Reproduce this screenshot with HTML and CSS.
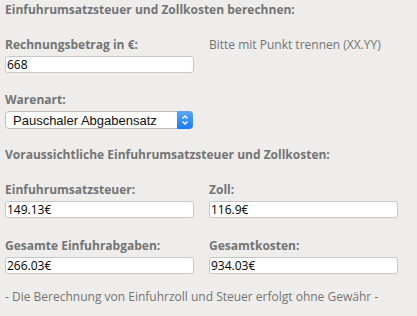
FILE: index.html
```html
<!DOCTYPE html>
<html lang="de">
<head>
    <meta charset="UTF-8">
    <title>Einfuhrumsatzsteuer und Zollkosten</title>
    <link rel="stylesheet" href="styles.css">
</head>
<body>
    <form class="calc">
        <h3 class="title">Einfuhrumsatzsteuer und Zollkosten berechnen:</h3>

        <div class="row first">
            <div class="field">
                <label class="lbl" for="betrag">Rechnungsbetrag in €:</label>
                <input type="text" id="betrag" value="668">
            </div>
            <div class="hint">Bitte mit Punkt trennen (XX.YY)</div>
        </div>

        <div class="field warenart">
            <label class="lbl" for="warenart">Warenart:</label>
            <div class="select-wrap">
                <select id="warenart">
                    <option>Pauschaler Abgabensatz</option>
                </select>
                <span class="select-btn">
                    <svg width="16" height="18" viewBox="0 0 16 18">
                        <path d="M5.5 7.5 L8 5 L10.5 7.5" fill="none" stroke="#fff" stroke-width="1.3"/>
                        <path d="M5.5 10.5 L8 13 L10.5 10.5" fill="none" stroke="#fff" stroke-width="1.3"/>
                    </svg>
                </span>
            </div>
        </div>

        <h3 class="title sub">Voraussichtliche Einfuhrumsatzsteuer und Zollkosten:</h3>

        <div class="row second">
            <div class="field">
                <label class="lbl">Einfuhrumsatzsteuer:</label>
                <input type="text" value="149.13€">
            </div>
            <div class="field">
                <label class="lbl">Zoll:</label>
                <input type="text" value="116.9€">
            </div>
        </div>

        <div class="row third">
            <div class="field">
                <label class="lbl">Gesamte Einfuhrabgaben:</label>
                <input type="text" value="266.03€">
            </div>
            <div class="field">
                <label class="lbl">Gesamtkosten:</label>
                <input type="text" value="934.03€">
            </div>
        </div>

        <p class="note">- Die Berechnung von Einfuhrzoll und Steuer erfolgt ohne Gewähr -</p>
    </form>
</body>
</html>
```

FILE: styles.css
```css
body {
    margin: 0;
    padding: 2px 5px 0;
    background-color: #efedeb;
    font-family: "Open Sans", sans-serif;
    font-size: 12px;
    line-height: 16px;
    color: #747474;
}
.title {
    margin: 0;
    font-size: 12px;
    line-height: 16px;
    font-weight: bold;
}
.title.sub {
    margin-top: 18px;
}
.row {
    display: grid;
    grid-template-columns: 204px 204px;
}
.row.first {
    margin-top: 19px;
}
.row.second {
    margin-top: 19px;
}
.row.third {
    margin-top: 20px;
}
.field {
    display: flex;
    flex-direction: column;
}
.lbl {
    font-weight: bold;
    line-height: 16px;
    margin-bottom: 3px;
}
.hint {
    line-height: 16px;
}
input[type="text"] {
    box-sizing: border-box;
    width: 189px;
    height: 17px;
    margin: 0;
    padding: 0 1px;
    border: 1px solid #c8c8c8;
    border-radius: 3px;
    background: #fff;
    font-family: "Open Sans", sans-serif;
    font-size: 12px;
    color: #000;
    outline: none;
}
.warenart {
    margin-top: 19px;
}
.select-wrap {
    position: relative;
    width: 188px;
    height: 18px;
}
select {
    appearance: none;
    -webkit-appearance: none;
    box-sizing: border-box;
    width: 188px;
    height: 18px;
    margin: 0;
    padding: 0 0 0 7px;
    border: 1px solid #bdbdbd;
    border-radius: 4px;
    background: #fff;
    font-family: "Liberation Sans", Arial, sans-serif;
    font-size: 13px;
    color: #111;
}
.select-btn {
    position: absolute;
    top: 0;
    right: 0;
    width: 16px;
    height: 18px;
    border-radius: 0 4px 4px 0;
    background: linear-gradient(#5aa6fb, #1a7cf5);
    display: flex;
    align-items: center;
    justify-content: center;
}
.note {
    margin: 15px 0 0;
    line-height: 16px;
}
```
